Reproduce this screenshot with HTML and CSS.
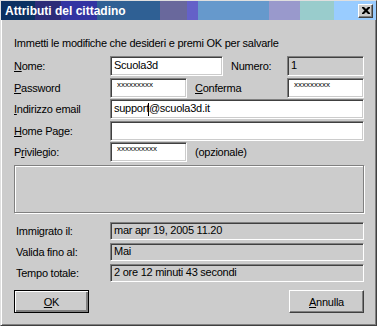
FILE: index.html
```html
<!DOCTYPE html>
<html lang="it">
<head>
    <meta charset="UTF-8">
    <title>Attributi del cittadino</title>
    <link rel="stylesheet" href="styles.css">
</head>
<body>
<div class="window">
    <div class="titlebar">
        <span class="title">Attributi del cittadino</span>
        <span class="close">
            <svg width="8" height="7" viewBox="0 0 8 7"><path d="M0 0h2l2 2 2-2h2v1l-2.5 2.5L8 6v1H6L4 5 2 7H0V6l2.5-2.5L0 1z" fill="#000"/></svg>
        </span>
    </div>
    <div class="body">
        <p class="intro">Immetti le modifiche che desideri e premi OK per salvarle</p>

        <div class="form">
            <div class="row">
                <span class="lbl"><u>N</u>ome:</span>
                <div class="field w-name">Scuola3d</div>
                <span class="lbl2 numero">Numero:</span>
                <div class="field ro w-small">1</div>
            </div>
            <div class="row">
                <span class="lbl"><u>P</u>assword</span>
                <div class="field w-small pwd">xxxxxxxxx</div>
                <span class="lbl2 conf"><u>C</u>onferma</span>
                <div class="field w-small pwd">xxxxxxxxx</div>
            </div>
            <div class="row">
                <span class="lbl"><u>I</u>ndirizzo email</span>
                <div class="field w-wide">support<span class="caret"></span>@scuola3d.it</div>
            </div>
            <div class="row">
                <span class="lbl"><u>H</u>ome Page:</span>
                <div class="field w-wide"></div>
            </div>
            <div class="row">
                <span class="lbl">P<u>r</u>ivilegio:</span>
                <div class="field w-small pwd">xxxxxxxxxx</div>
                <span class="lbl2">(opzionale)</span>
            </div>
        </div>

        <div class="group"></div>

        <div class="info">
            <div class="info-row">
                <span class="lbl">Immigrato il:</span>
                <div class="field ro w-info">mar apr 19, 2005 11.20</div>
            </div>
            <div class="info-row">
                <span class="lbl">Valida fino al:</span>
                <div class="field ro w-info">Mai</div>
            </div>
            <div class="info-row">
                <span class="lbl">Tempo totale:</span>
                <div class="field ro w-info">2 ore 12 minuti 43 secondi</div>
            </div>
        </div>

        <div class="buttons">
            <button class="btn default" type="button"><u>O</u>K</button>
            <button class="btn" type="button"><u>A</u>nnulla</button>
        </div>
    </div>
</div>
</body>
</html>
```

FILE: styles.css
```css
body {
    margin: 0;
    font-family: "Liberation Sans", Arial, sans-serif;
    font-size: 11px;
    letter-spacing: -0.25px;
    color: #000;
}

.window {
    width: 377px;
    height: 326px;
    box-sizing: border-box;
    background-color: #cccccc;
    border: 1px solid;
    border-color: #dfdfdf #404040 #404040 #dfdfdf;
    box-shadow: inset 1px 1px #fff, inset -1px -1px #808080;
}

.titlebar {
    height: 19px;
    display: flex;
    align-items: center;
    justify-content: space-between;
    background: linear-gradient(to right,
        #0b3062 0 34px, #2d2c78 34px 60px, #3334a2 60px 96px,
        #2f6094 96px 159px, #69689c 159px 186px, #6461c8 186px 197px,
        #6699cc 197px 268px, #9999cc 268px 299px, #99cccc 299px 333px,
        #99ccff 333px);
}

.title {
    padding-left: 4px;
    color: #fff;
    font-weight: bold;
    font-size: 12px;
    letter-spacing: 0;
}

.close {
    width: 15px;
    height: 14px;
    box-sizing: border-box;
    margin-right: 3px;
    display: flex;
    align-items: center;
    justify-content: center;
    background-color: #cccccc;
    border: 1px solid;
    border-color: #fff #404040 #404040 #fff;
    box-shadow: inset -1px -1px #808080;
}

.body {
    padding: 0 12px 0 13px;
}

.intro {
    margin: 17px 0 0;
    line-height: 13px;
}

.form {
    margin-top: 6px;
    display: flex;
    flex-direction: column;
    gap: 1.5px;
}

.row, .info-row {
    display: flex;
    align-items: center;
    height: 20px;
}

.lbl {
    width: 96px;
    flex: none;
}

.lbl2 {
    margin-left: 8px;
}

.numero {
    width: 56px;
}

.conf {
    width: 92px;
}

.field {
    box-sizing: border-box;
    height: 20px;
    padding: 0 3px;
    line-height: 17px;
    background-color: #fff;
    border: 1px solid;
    border-color: #808080 #fff #fff #808080;
    box-shadow: inset 1px 1px #404040, inset -1px -1px #cccccc;
    white-space: nowrap;
    overflow: hidden;
}

.field.ro {
    background-color: #cccccc;
}

.w-name { width: 113px; }
.w-small { width: 77px; }
.w-wide { width: 254px; }
.w-info { width: 255px; height: 18px; line-height: 15px; }

.pwd {
    font-size: 8px;
    letter-spacing: 0;
    line-height: 12px;
    padding-left: 6px;
}

.caret {
    display: inline-block;
    width: 0;
    height: 13px;
    border-left: 1px solid #000;
    margin-left: -1px;
    vertical-align: middle;
}

.group {
    margin-top: 3px;
    height: 48px;
    box-sizing: border-box;
    border: 1px solid #808080;
    box-shadow: inset 1px 1px #fff, 1px 1px #fff;
}

.info {
    margin-top: 8px;
    display: flex;
    flex-direction: column;
    gap: 1px;
}

.info .lbl {
    padding-left: 2px;
    box-sizing: border-box;
}

.buttons {
    margin-top: 7px;
    display: flex;
    justify-content: space-between;
}

.btn {
    width: 75px;
    height: 23px;
    padding: 0;
    font-family: "Liberation Sans", Arial, sans-serif;
    font-size: 11px;
    letter-spacing: -0.25px;
    color: #000;
    background-color: #cccccc;
    border: 1px solid;
    border-color: #fff #404040 #404040 #fff;
    box-shadow: inset -1px -1px #808080;
}

.btn.default {
    border-color: #000;
    box-shadow: inset 1px 1px #fff, inset -2px -2px #808080;
}
```
